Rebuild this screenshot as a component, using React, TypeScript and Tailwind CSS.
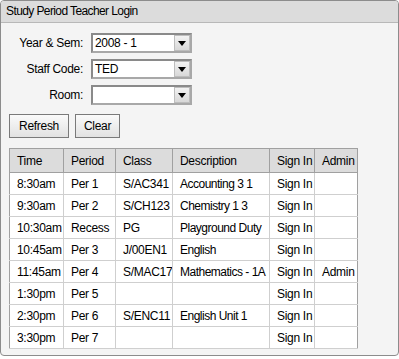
import React from 'react'

const rows = [
  ['8:30am', 'Per 1', 'S/AC341', 'Accounting 3 1', 'Sign In', ''],
  ['9:30am', 'Per 2', 'S/CH123', 'Chemistry 1 3', 'Sign In', ''],
  ['10:30am', 'Recess', 'PG', 'Playground Duty', 'Sign In', ''],
  ['10:45am', 'Per 3', 'J/00EN1', 'English', 'Sign In', ''],
  ['11:45am', 'Per 4', 'S/MAC17', 'Mathematics - 1A', 'Sign In', 'Admin'],
  ['1:30pm', 'Per 5', '', '', 'Sign In', ''],
  ['2:30pm', 'Per 6', 'S/ENC11', 'English Unit 1', 'Sign In', ''],
  ['3:30pm', 'Per 7', '', '', 'Sign In', ''],
]

const headers = ['Time', 'Period', 'Class', 'Description', 'Sign In', 'Admin']
const widths = ['w-[54px]', 'w-[52px]', 'w-[57px]', 'w-[97px]', 'w-[45px]', 'w-[43px]']

function Select({ value }: { value: string }) {
  return (
    <div className="flex h-[20px] w-[101px] border-2 border-t-[#8a8a8a] border-l-[#8a8a8a] border-r-[#a8a8a8] border-b-[#a8a8a8] bg-white">
      <div className="flex-1 pl-[2px] text-[12px] leading-[16px] tracking-[-0.3px]">{value}</div>
      <div className="flex w-[16px] items-center justify-center border border-[#bdbdbd] bg-gradient-to-b from-[#f2f2f2] to-[#d8d8d8]">
        <svg width="8" height="5" viewBox="0 0 8 5">
          <path d="M0 0h8L4 5z" fill="#000" />
        </svg>
      </div>
    </div>
  )
}

function Button({ label, w }: { label: string; w: string }) {
  return (
    <button className={`${w} h-[24px] border border-[#7a7a7a] bg-gradient-to-b from-[#fafafa] to-[#e2e2e2] text-[12px] tracking-[-0.3px] text-black`}>
      {label}
    </button>
  )
}

export default function App() {
  const fields: [string, string][] = [
    ['Year & Sem:', '2008 - 1'],
    ['Staff Code:', 'TED'],
    ['Room:', ''],
  ]

  return (
    <div
      className="h-[359px] w-[399px] whitespace-nowrap bg-white text-[12px] tracking-[-0.3px] text-black"
      style={{ fontFamily: '"Liberation Sans", Arial, sans-serif' }}
    >
      <div className="h-[356px] w-[399px] overflow-hidden rounded-[4px] border border-[#8c8c8c] bg-[#f4f4f4]">
        <div className="h-[22px] border-b border-[#b8b8b8] bg-[#dcdcdc] pl-[5px] leading-[21px] tracking-[-0.6px]">
          Study Period Teacher Login
        </div>

        <div className="mt-[10px] flex flex-col gap-[6px]">
          {fields.map(([label, value]) => (
            <div key={label} className="flex items-center">
              <div className="w-[83px] pr-[1px] text-right">{label}</div>
              <div className="ml-[7px]">
                <Select value={value} />
              </div>
            </div>
          ))}
        </div>

        <div className="ml-[8px] mt-[9px] flex gap-[6px]">
          <Button label="Refresh" w="w-[60px]" />
          <Button label="Clear" w="w-[45px]" />
        </div>

        <table className="ml-[8px] mt-[10px] w-[348px] table-fixed border-collapse bg-white">
          <thead>
            <tr className="h-[24px] bg-[#dcdcdc]">
              {headers.map((h, i) => (
                <th
                  key={h}
                  className={`${widths[i]} overflow-hidden border border-[#a0a0a0] p-0 pl-[7px] text-left font-normal leading-[22px]`}
                >
                  {h}
                </th>
              ))}
            </tr>
          </thead>
          <tbody>
            {rows.map((r) => (
              <tr key={r[0]} className="h-[22px]">
                {r.map((c, i) => (
                  <td
                    key={i}
                    className={`overflow-hidden border border-[#cfcfcf] p-0 pl-[7px] leading-[20px] ${i === 0 ? 'border-l-[#a0a0a0]' : ''} ${i === 5 ? 'border-r-[#a0a0a0]' : ''} ${i === 3 ? 'tracking-[-0.5px]' : ''}`}
                  >
                    {c}
                  </td>
                ))}
              </tr>
            ))}
          </tbody>
        </table>
      </div>
    </div>
  )
}
